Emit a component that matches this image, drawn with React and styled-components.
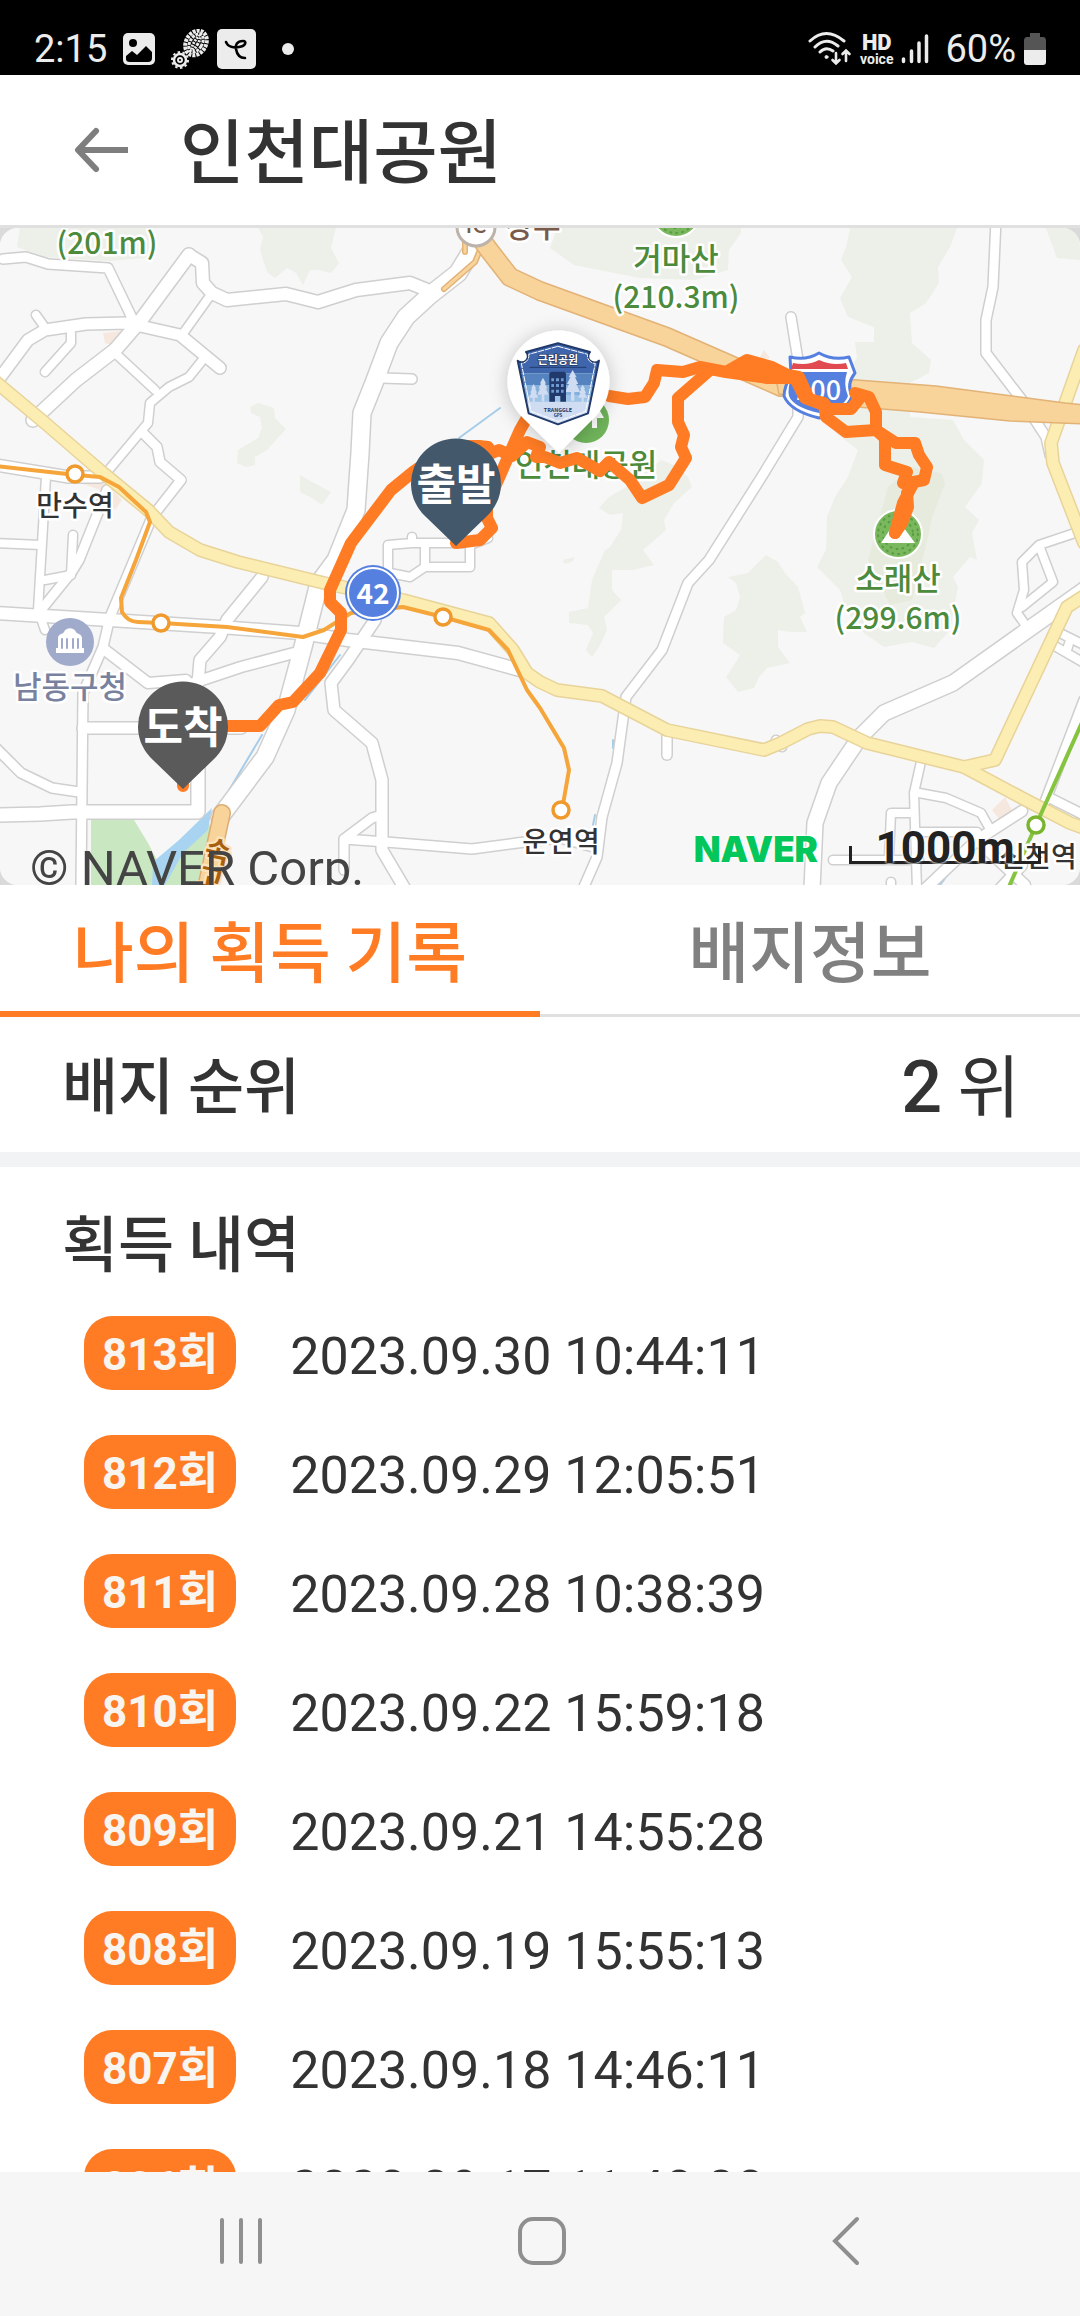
import React from "react";
import styled, { createGlobalStyle } from "styled-components";

const KR = '"Noto Sans CJK KR", "Noto Sans", sans-serif';
const SYSTEM = 'Roboto, "Noto Sans CJK KR", sans-serif';
const ORANGE = "#ff7c24";
const INK = "#333333";

const GlobalStyle = createGlobalStyle`
  * { box-sizing: border-box; }
  body { margin: 0; background: #fff; color: ${INK}; font-family: ${KR}; }
  button { border: 0; padding: 0; background: none; font: inherit; color: inherit; cursor: pointer; }
  svg { display: block; }
`;

const Screen = styled.div`
  display: flex;
  flex-direction: column;
  height: 100vh;
  overflow: hidden;
`;

const StatusBar = styled.div`
  display: flex;
  flex: none;
  align-items: center;
  justify-content: space-between;
  height: 75px;
  padding: 22px 34px 0;
  background: #000;
  color: #ececec;
  font: 400 38px/48px ${SYSTEM};
`;

const StatusGroup = styled.div`
  display: flex;
  align-items: center;
  gap: ${(p) => p.$gap}px;
`;

const HdVoice = styled.span`
  display: flex;
  flex-direction: column;
  align-items: center;
  font: 900 22px/20px Roboto, sans-serif;
`;

const VoiceText = styled.span`
  font: 700 14px/12px Roboto, sans-serif;
`;

const Header = styled.header`
  display: flex;
  flex: none;
  align-items: center;
  gap: 50px;
  height: 153px;
  padding: 0 72px;
  border-bottom: 3px solid #e0e0e0;
`;

const Title = styled.h1`
  margin: 0;
  padding-bottom: 4px;
  font-size: 70px;
  font-weight: 500;
  line-height: 100px;
`;

const MapFrame = styled.section`
  flex: none;
  background: #dadada;
`;

const MapCard = styled.div`
  position: relative;
  overflow: hidden;
  border-radius: 18px;
  background: #f7f7f7;
  & > svg { width: 100%; height: auto; }
`;

const Copyright = styled.span`
  position: absolute;
  left: 30px;
  bottom: -12px;
  color: #444;
  font: 400 49px/56px ${SYSTEM};
`;

const MapLegend = styled.div`
  position: absolute;
  right: 39px;
  bottom: 21px;
  display: flex;
  align-items: flex-end;
  gap: 31px;
`;

const NaverMark = styled.span`
  color: #03c75a;
  font: 900 35px/30px Inter, sans-serif;
  text-shadow: 0 0 3px #fff, 0 0 3px #fff;
`;

const ScaleBar = styled.span`
  width: 192px;
  height: 32px;
  text-align: center;
  color: #222;
  font: 700 44px/32px ${SYSTEM};
  background:
    linear-gradient(#222, #222) left bottom / 3px 18px no-repeat,
    linear-gradient(#222, #222) right bottom / 3px 18px no-repeat,
    linear-gradient(#222, #222) left bottom / 100% 3px no-repeat;
  text-shadow: 0 0 3px #fff, 0 0 3px #fff;
`;

const Tabs = styled.div`
  display: flex;
  flex: none;
  height: 132px;
  box-shadow: inset 0 -3px #e0e0e0;
`;

const Tab = styled.button`
  flex: 1;
  border-bottom: 6px solid ${(p) => (p.$active ? ORANGE : "transparent")};
  color: ${(p) => (p.$active ? ORANGE : "#808080")};
  font-size: 66px;
  font-weight: 500;
  line-height: 92px;
`;

const RankRow = styled.section`
  display: flex;
  flex: none;
  align-items: center;
  justify-content: space-between;
  height: 135px;
  padding: 0 60px 0 62px;
`;

const SectionTitle = styled.h2`
  margin: 0;
  padding-bottom: 4px;
  font-size: 61px;
  font-weight: 500;
  line-height: 88px;
`;

const Rank = styled.span`
  padding-top: 2px;
  font: 400 68px/92px ${KR};
`;

const RankNumber = styled.strong`
  font: 500 72px/92px ${SYSTEM};
`;

const Divider = styled.hr`
  flex: none;
  width: 100%;
  height: 15px;
  margin: 0;
  border: 0;
  background: #f1f3f5;
`;

const History = styled.section`
  flex: 1;
  min-height: 0;
  padding: 30px 62px 0;
  overflow: hidden;
`;

const HistoryList = styled.ol`
  display: flex;
  flex-direction: column;
  gap: 45px;
  margin: 27px 0 0;
  padding: 0 22px;
  list-style: none;
`;

const HistoryItem = styled.li`
  display: flex;
  align-items: center;
  gap: 54px;
  height: 74px;
`;

const CountPill = styled.span`
  height: 74px;
  padding: 2px 18px 0;
  border-radius: 28px;
  background: ${ORANGE};
  color: #f8f4f0;
  font: 700 44px/74px ${SYSTEM};
  white-space: nowrap;
`;

const Stamp = styled.time`
  padding-top: 8px;
  font: 400 52px/74px ${SYSTEM};
  white-space: nowrap;
`;

const NavBar = styled.nav`
  display: flex;
  flex: none;
  align-items: center;
  justify-content: space-between;
  height: 144px;
  padding: 0 210px 6px;
  background: #f6f6f6;
  color: #8f8f8f;
`;

const records = [
  ["813", "2023.09.30 10:44:11"],
  ["812", "2023.09.29 12:05:51"],
  ["811", "2023.09.28 10:38:39"],
  ["810", "2023.09.22 15:59:18"],
  ["809", "2023.09.21 14:55:28"],
  ["808", "2023.09.19 15:55:13"],
  ["807", "2023.09.18 14:46:11"],
  ["806", "2023.09.17 11:48:08"],
];

/* ---------- status icons ---------- */

const PictureIcon = () => (
  <svg width="32" height="32" viewBox="0 0 32 32">
    <rect width="32" height="32" rx="5" fill="#ececec" />
    <circle cx="10" cy="10" r="4" />
    <path d="M3 23L9 18L14 22L23 13L29 19V25Q29 29 25 29H7Q3 29 3 26Z" />
  </svg>
);

const TireIcon = () => (
  <svg width="40" height="40" viewBox="0 0 40 40" fill="none" stroke="#ececec">
    <g transform="rotate(30 25 14)">
      <ellipse cx="25" cy="14" rx="10" ry="13" strokeWidth="4" strokeDasharray="3 1" />
      <ellipse cx="25" cy="14" rx="6" ry="10" strokeWidth="3" strokeDasharray="3 1" />
      <ellipse cx="25" cy="14" rx="2" ry="8" strokeWidth="3" strokeDasharray="2 1" />
    </g>
    <circle cx="9" cy="31" r="6" strokeWidth="2.5" />
    <circle cx="9" cy="31" r="8" strokeWidth="2" strokeDasharray="2.5 2.5" />
    <circle cx="9" cy="31" r="2" strokeWidth="2" />
  </svg>
);

const SwirlIcon = () => (
  <svg width="40" height="40" viewBox="0 0 40 40" fill="none">
    <rect width="39" height="40" rx="5" fill="#ececec" />
    <path d="M9 13C11 18 17 19 22 18C29 17 30 12 26 12C20 12 18 16 19 20C20 26 23 29 28 29" stroke="#000" strokeWidth="2.600" strokeLinecap="round" />
  </svg>
);

const DotIcon = () => (
  <svg width="14" height="14" viewBox="0 0 14 14"><circle cx="7" cy="7" r="6" fill="#ececec" /></svg>
);

const WifiIcon = () => (
  <svg width="44" height="36" viewBox="0 0 44 36" fill="none" stroke="#ececec" strokeWidth="3" strokeLinecap="round">
    <path d="M2 10Q18 -5 36 10M7 16Q18 5 30 15M12 21Q18 15 25 20" />
    <circle cx="18.500" cy="26" r="1.500" fill="#ececec" strokeWidth="1" />
    <path d="M28 22V32M24.500 29L28 32.500L31.500 29M38 30V20M34.500 23L38 19.500L41.500 23" strokeWidth="2.600" />
  </svg>
);

const SignalIcon = () => (
  <svg width="28" height="32" viewBox="0 0 28 32" stroke="#ececec" strokeWidth="3.500" strokeLinecap="round">
    <path d="M2.500 26V28.500M10.500 18V28.500M18 10V28.500M25.500 3V28.500" />
  </svg>
);

const BatteryIcon = () => (
  <svg width="22" height="34" viewBox="0 0 22 34">
    <path d="M6 1H16V5H19Q22 5 22 9V18H0V9Q0 5 3 5H6Z" fill="#555" />
    <path d="M0 18H22V30Q22 33 19 33H3Q0 33 0 30Z" fill="#ececec" />
  </svg>
);

/* ---------- map drawing ---------- */

const localRoads = [
  [9, "M3 259L26 257L48 264L108 268L133 320"],
  [13, "M189 255L141 320L115 350L76 380L33 420"],
  [12, "M189 255L202 263L203 283L212 293L227 300L286 294L318 302L356 290L410 283L432 292"],
  [8, "M212 293L182 335"],
  [11, "M-4 383L28 340L45 330L86 324L127 323L180 335L220 368"],
  [8, "M36 315L46 329"],
  [8, "M71 333V343L45 372"],
  [8, "M115 353L155 390"],
  [8, "M205 357L189 377L169 387L150 403L148 423L107 472"],
  [9, "M143 433L157 447L160 462L181 480L152 517L134 560L110 617L103 647L83 693L81 885"],
  [11, "M-4 465L69 477L100 477"],
  [8, "M46 477L41 560L38 610L45 630"],
  [8, "M-4 543L41 545"],
  [9, "M107 490L79 560L71 573L41 610"],
  [8, "M73 535L71 575L45 580"],
  [17, "M474 228L472 250L458 273L430 295L406 317L389 343L374 383L362 413L360 453L356 510L336 560L319 583L303 647L286 710L265 757L220 817"],
  [9, "M382 378L412 379"],
  [9, "M996 220L993 287L986 320V353L1022 400L1046 437L1050 455"],
  [9, "M791 317L798 360V417L764 473L709 560L688 583L662 650L626 697L617 763L602 817L597 857L583 889"],
  [8, "M1084 530L1039 545L1022 562L1024 590L1017 613L1029 630"],
  [8, "M1040 548L1053 582L1022 607"],
  [15, "M1084 590L953 683L884 713L860 737L829 783L815 823L812 889"],
  [8, "M1058 632L1084 645M1053 645L1084 663M1070 640L1067 650"],
  [9, "M1084 700L1043 807M1050 798L1084 815"],
  [9, "M667 735V755"],
  [8, "M776 740L782 747"],
  [8, "M922 757L914 793L917 889M919 793L946 798L981 813L990 829M914 813H891L889 857M914 832L977 832M833 860H919M891 882V889"],
  [10, "M1022 811L977 840L925 889M977 840L1025 885M1000 889L1022 865"],
  [12, "M-4 613L110 620L220 627L300 633L348 640L458 653L520 670"],
  [11, "M262 577L227 620L220 637L200 660L198 683"],
  [10, "M294 653L241 667L193 683M105 650L148 683L186 680"],
  [11, "M83 728H241"],
  [9, "M-4 748L21 773L52 788L79 792"],
  [13, "M-4 815L40 814L72 812L198 812V760"],
  [11, "M375 620L348 660L331 683L334 710L372 743L382 780V850L405 889"],
  [9, "M382 815L372 818L344 839V870M344 839L386 842L472 849L517 843L560 838L597 848"],
  [8, "M388 572V545L412 543H470V567H425L410 577L390 573M425 545V567M412 543V537M470 545L488 538"],
];

const yellowRoads = [
  "M-4 382L45 423L103 473L148 510L169 532L200 550L238 562L324 583L403 600L489 623L513 650L527 673L540 682L557 690L602 696L667 730L764 750L781 743L808 729L820 726L833 727L867 743L964 767L1022 798L1070 823L1084 828",
  "M964 767L995 760L1050 643L1067 607L1084 596",
  "M1084 350L1051 443L1053 463L1084 543",
];

const routes = [
  "M183 786V726H260L279 705L293 702L320 673L341 630V613L330 602V590L351 543L391 490L413 472L450 446H479L488 447L492 453L499 450L512 456L527 442L540 447L536 457H545L560 463L577 458L600 471L609 462L630 480L642 498L669 485L686 458L681 447L684 435L678 422V398L710 370",
  "M609 396L628 399L645 397L654 383L657 370L683 372L700 367L726 372L747 360L772 367L788 375L799 377L809 399L824 403L828 409H851L860 398L855 393L869 397L876 412V430L896 443H915L919 455L927 467L924 480L914 482L907 493L908 507L902 523L895 533",
  "M726 372L767 378L795 378L805 398L824 405L826 417L846 432L876 430L885 438V465L907 472L903 483L914 482L903 503L895 533",
  "M745 364L768 373L793 378",
  "M540 395L520 430L487 505V518L492 528L480 540L456 543",
];

const Cased = ({ d, w, fill, edge }) => (
  <>
    {edge && <path d={d} stroke={edge} strokeWidth={w + 3} />}
    {fill && <path d={d} stroke={fill} strokeWidth={w} />}
  </>
);

const Station = ({ x, y, color }) => (
  <circle cx={x} cy={y} r="8" fill="#fff" stroke={color} strokeWidth="3.500" />
);

const MapText = styled.text`
  font-family: ${KR};
  font-size: ${(p) => p.$size}px;
  font-weight: ${(p) => p.$weight || 500};
  fill: ${(p) => p.$fill};
  stroke: ${(p) => p.$halo || "none"};
  stroke-width: 5px;
  stroke-linejoin: round;
  paint-order: stroke;
  text-anchor: middle;
`;

const Label = ({ x, y, size = 28, color = "#333", children }) => (
  <MapText x={x} y={y} $size={size} $fill={color} $halo="#fff">{children}</MapText>
);

const Pin = ({ x, y, color, children }) => (
  <g transform={`translate(${x} ${y})`}>
    <path d="M0 63L-30 34A45 45 0 1 1 30 34Z" fill={color} />
    <MapText x="0" y="17" $size={43} $weight={700} $fill="#fff">{children}</MapText>
  </g>
);

const PeakIcon = ({ x, y }) => (
  <g transform={`translate(${x} ${y})`}>
    <circle r="24" fill="#7ab85e" stroke="#fff" strokeWidth="2" />
    <circle r="20" fill="none" stroke="#5a9a45" strokeWidth="2" strokeDasharray="1 5" />
    <circle r="15" fill="none" stroke="#5a9a45" strokeWidth="2" strokeDasharray="1 5" />
    <path d="M-17 9L-5 -9L1 -1L6 -6L17 9Z" fill="#fff" />
  </g>
);

const Tree = ({ x, y, s }) => (
  <path transform={`translate(${x} ${y}) scale(${s})`} d="M0 0L12 22H7L17 42H11L22 66H5V92H-5V66H-22L-11 42H-17L-7 22H-12Z" fill="#cfdcf2" />
);

const ParkBadge = () => (
  <g>
    <path d="M559 453L524 419A51 51 0 1 1 593 419Z" fill="#fff" filter="url(#pinShadow)" />
    <g transform="translate(380 310) scale(0.3333)">
      <clipPath id="shield">
        <path d="M534 100L630 126A17 17 0 0 0 657 152L624 310L534 343L446 310L413 152A17 17 0 0 0 438 126Z" />
      </clipPath>
      <g clipPath="url(#shield)">
        <path d="M400 90H670V190H400Z" fill="#3f66ad" />
        <path d="M400 190H670V225H400Z" fill="#5583bf" />
        <path d="M400 225H670V275H400Z" fill="#86b0dc" />
        <path d="M400 272H670V350H400Z" fill="#cfdcf2" />
        <path d="M400 270H440V255H640V275H400Z" fill="#9fc3e6" />
      </g>
      <Tree x="461" y="222" s="0.620" />
      <Tree x="489" y="203" s="0.780" />
      <Tree x="578" y="180" s="1" />
      <Tree x="608" y="224" s="0.600" />
      <path d="M508 275V190L514 185H552L558 190V275H541V258H525V275Z" fill="#213a6b" />
      <path d="M514 205h8v9h-8zM528 205h9v9h-9zM543 205h8v9h-8zM514 222h8v9h-8zM528 222h9v9h-9zM543 222h8v9h-8zM514 239h8v9h-8zM528 239h9v9h-9zM543 239h8v9h-8z" fill="#6f9bd0" />
      <path d="M450 172H618" stroke="#213a6b" strokeWidth="3" />
      <path d="M534 100L630 126A17 17 0 0 0 657 152L624 310L534 343L446 310L413 152A17 17 0 0 0 438 126Z" fill="none" stroke="#213a6b" strokeWidth="6" />
      <path d="M534 109L623 133A22 22 0 0 0 646 160L617 304L534 334L453 304L424 160A22 22 0 0 0 446 133Z" fill="none" stroke="#fff" strokeWidth="3" strokeDasharray="16 5" />
      <MapText x="534" y="163" $size={33} $weight={700} $fill="#fff" $halo="#213a6b">근린공원</MapText>
      <MapText x="534" y="306" $size={16} $weight={700} $fill="#213a6b">TRANGGLE</MapText>
      <MapText x="534" y="322" $size={13} $weight={700} $fill="#213a6b">GPS</MapText>
    </g>
  </g>
);

const TrailMap = () => (
  <svg viewBox="0 228 1080 657" role="img" aria-label="인천대공원 지도" fill="none" strokeLinejoin="round" strokeLinecap="round">
    <defs>
      <filter id="pinShadow" x="-40%" y="-40%" width="180%" height="180%">
        <feDropShadow dx="0" dy="2" stdDeviation="9" floodColor="#000" floodOpacity="0.220" />
      </filter>
    </defs>
    <rect y="228" width="1080" height="657" fill="#f7f7f7" />
    <g fill="#edf0e9">
      <path d="M20 228L17 247L45 257L110 261L155 257L153 228Z" />
      <path d="M258 228L263 237L260 250L267 272L275 278L287 268L296 273L303 285L310 270H318L331 273L339 263L331 248L336 228Z" />
      <path d="M250 407L258 403L274 408L275 418L286 429L267 450L255 457V465L246 467L237 463L238 450L258 438L262 428L260 417L251 413Z" />
      <path d="M300 475L312 482L331 492L322 505L312 498L300 492Z" />
      <path d="M557 228L550 248L574 265L599 270L640 278L695 280L728 270L729 250L741 233V228Z" />
      <path d="M850 228L846 247L841 260L852 277L840 298L848 317L874 327V342H855L857 357L848 375L850 400L829 417L836 433L858 450L848 477L835 497L827 517L826 550L817 567L840 590L846 610L864 633L884 647L912 642L934 648L950 630L958 587L953 577L970 557L977 560L972 533L979 520L965 507L982 483L984 460L964 440L953 420L910 417V383L929 373L931 360L912 343L910 313L926 303L939 283L938 267L950 247L957 228Z" />
      <path d="M1046 228L1057 258L1080 260V228Z" />
      <path d="M661 460L674 465L688 477L692 487L674 503L664 520L666 530L643 550L654 565L633 570H612V590L621 600L604 617L607 630L599 647L592 657L586 650L593 633L588 625L569 623V612L588 608L592 580L605 550L610 547L621 530L623 513L610 515L599 508L609 497L626 487Z" />
      <path d="M766 555L778 562L785 573L798 587L805 613L800 617L807 632H790L778 630V647L790 663L767 668L759 677L754 688L738 692L726 677L731 670L740 655L723 643L724 617L736 610L740 597L736 583L728 577L748 573Z" />
      <path d="M563 560L575 557L572 562L564 564Z" />
    </g>
    <path d="M912 467L941 473L945 483L931 520L929 533L912 600L890 605L868 560L888 487Z" fill="#e6ebdd" />
    <g fill="#f6e8de">
      <path d="M103 333L122 331L112 345L105 343Z" />
      <path d="M78 482H105L122 500L115 510L100 490Z" />
      <path d="M992 810L1005 797L1012 810L1000 820Z" />
      <path d="M758 360L764 350L770 358Z" />
    </g>
    <path d="M91 820H134L148 843L162 870V885H91Z M208 820L218 850L205 885H160L179 857Z" fill="#c9e7c0" />
    <path d="M212 808L208 830L183 853L165 885H152L153 862L179 840Z" fill="#a8d4f2" />
    <path d="M340 655L305 700M262 735L222 802M459 438L500 408M613 740V748M595 815L593 825M955 865L940 885" stroke="#a5cdea" strokeWidth="2" />

    {localRoads.map(([w, d]) => <Cased key={d} d={d} w={w} edge="#cfcfcf" />)}
    {localRoads.map(([w, d]) => <Cased key={d} d={d} w={w} fill="#fff" />)}
    {yellowRoads.map((d) => <Cased key={d} d={d} w={11} edge="#e8d49a" />)}
    {yellowRoads.map((d) => <Cased key={d} d={d} w={11} fill="#fcedb2" />)}

    <Cased d="M465 240V252M480 250L475 262L444 289" w={3} edge="#e2b277" fill="#f8d39a" />
    <Cased d="M478 235L489 250L510 277L540 291L667 337L781 387" w={17} edge="#e2b277" fill="#f8d39a" />
    <path d="M775 374L857 380L936 386L1065 403L1084 405V424L1010 421L920 412L857 407L779 394Z" fill="#f8d39a" stroke="#e2b277" strokeWidth="1.500" />
    <Cased d="M222 813L205 892" w={15} edge="#dcae76" fill="#f8d39a" />

    <g strokeWidth="4" stroke="#f5a53a">
      <path d="M-4 466L76 475L100 477L119 487L146 512L150 522L136 560L121 598L122 612Q128 622 138 622L161 623L227 627L303 637L324 630L351 613L403 607L443 617L489 630L508 650L527 690L540 708L564 748L569 770L562 810" />
      <path d="M1084 718L1036 825L1008 889" stroke="#86c440" />
    </g>
    <Station x="75" y="474" color="#f09a2e" />
    <Station x="161" y="623" color="#f09a2e" />
    <Station x="443" y="617" color="#f09a2e" />
    <Station x="561" y="810" color="#f09a2e" />
    <Station x="1036" y="825" color="#79b52f" />

    <g transform="translate(70 642)">
      <circle r="24" fill="#a0abcc" />
      <path d="M-12 -4C-12 -8 -7 -8 -6 -10C-4 -15 4 -15 6 -10C7 -8 12 -8 12 -4V6H14V11H-14V6H-12Z" fill="#fff" />
      <path d="M-8 -3V6M-3 -3V6M3 -3V6M8 -3V6" stroke="#a0abcc" strokeWidth="2" />
    </g>
    <PeakIcon x={676} y={213} />
    <PeakIcon x={898} y={534} />
    <circle cx="586" cy="420" r="23" fill="#6fb35a" />
    <path d="M594 400L604 418H597V428H592V418H584Z" fill="#fff" />

    <circle cx="476" cy="227" r="19" fill="#fff" stroke="#bdb3aa" strokeWidth="3" />
    <Label x={476} y={233} size={22} color="#7a5a48">IC</Label>
    <Label x={533} y={237} size={30} color="#7a5a48">장수</Label>
    <Label x={107} y={254} size={30} color="#4c8a3c">(201m)</Label>
    <Label x={676} y={270} size={31} color="#4c8a3c">거마산</Label>
    <Label x={676} y={308} size={30} color="#4c8a3c">(210.3m)</Label>
    <Label x={898} y={590} size={31} color="#4c8a3c">소래산</Label>
    <Label x={898} y={629} size={30} color="#4c8a3c">(299.6m)</Label>
    <Label x={586} y={476} size={31} color="#4c8a3c">인천대공원</Label>
    <Label x={75} y={516} size={28}>만수역</Label>
    <Label x={70} y={698} size={31} color="#78829f">남동구청</Label>
    <Label x={561} y={852} size={28}>운연역</Label>
    <Label x={1038} y={867} size={28}>신천역</Label>
    <g transform="rotate(12 218 852)">
      <MapText x="218" y="862" $size={28} $weight={700} $fill="#a8600f" $halo="#fbe3bd">속</MapText>
      <MapText x="216" y="890" $size={28} $weight={700} $fill="#a8600f" $halo="#fbe3bd">고</MapText>
    </g>

    <path d="M790 357Q806 361 819 353Q833 361 849 357L855 373Q846 384 852 396Q848 411 819 418Q790 411 784 396Q784 388 791 374Z" fill="#fff" stroke="#5580e0" strokeWidth="3" />
    <path d="M793 363Q808 366 819 360Q832 366 846 363L848 369H791Z" fill="#e04a50" />
    <path d="M793 372H847Q843 384 848 396Q844 408 819 413Q793 407 789 396Q787 388 793 372Z" fill="#5580e0" />
    <MapText x="818" y="400" $size={27} $weight={500} $fill="#fff">100</MapText>
    <circle cx="373" cy="593" r="28" fill="#5580e0" />
    <circle cx="373" cy="593" r="25" stroke="#fff" strokeWidth="2" />
    <MapText x="373" y="604" $size={28} $weight={700} $fill="#fff">42</MapText>

    {routes.map((d) => <path key={d} d={d} stroke={ORANGE} strokeWidth="12" />)}

    <ParkBadge />
    <Pin x={456} y={483} color="#44586b">출발</Pin>
    <Pin x={183} y={726} color="#5a5a5a">도착</Pin>
  </svg>
);

export default function App() {
  return (
    <Screen>
      <GlobalStyle />
      <StatusBar>
        <StatusGroup $gap={16}>
          <span>2:15</span>
          <PictureIcon />
          <StatusGroup $gap={6}>
            <TireIcon />
            <SwirlIcon />
          </StatusGroup>
          <StatusGroup $gap={8}>
            <span />
            <DotIcon />
          </StatusGroup>
        </StatusGroup>
        <StatusGroup $gap={8}>
          <WifiIcon />
          <HdVoice>HD<VoiceText>voice</VoiceText></HdVoice>
          <SignalIcon />
          <span />
          <span>60%</span>
          <BatteryIcon />
        </StatusGroup>
      </StatusBar>

      <Header>
        <button type="button" aria-label="뒤로">
          <svg width="58" height="48" viewBox="0 0 58 48" fill="none" stroke="#7e7e7e" strokeWidth="6">
            <path d="M24 5L6 24L24 43" strokeLinecap="round" strokeLinejoin="round" />
            <path d="M6 24H56" />
          </svg>
        </button>
        <Title>인천대공원</Title>
      </Header>

      <MapFrame>
        <MapCard>
          <TrailMap />
          <Copyright>© NAVER Corp.</Copyright>
          <MapLegend>
            <NaverMark>NAVER</NaverMark>
            <ScaleBar>1000m</ScaleBar>
          </MapLegend>
        </MapCard>
      </MapFrame>

      <Tabs role="tablist">
        <Tab type="button" role="tab" aria-selected="true" $active>나의 획득 기록</Tab>
        <Tab type="button" role="tab" aria-selected="false">배지정보</Tab>
      </Tabs>

      <RankRow>
        <SectionTitle>배지 순위</SectionTitle>
        <Rank><RankNumber>2</RankNumber> 위</Rank>
      </RankRow>
      <Divider />

      <History>
        <SectionTitle>획득 내역</SectionTitle>
        <HistoryList>
          {records.map(([count, stamp]) => (
            <HistoryItem key={count}>
              <CountPill>{count}회</CountPill>
              <Stamp>{stamp}</Stamp>
            </HistoryItem>
          ))}
        </HistoryList>
      </History>

      <NavBar>
        <button type="button" aria-label="최근 앱">
          <svg width="60" height="50" viewBox="0 0 60 50" stroke="currentColor" strokeWidth="4" strokeLinecap="round">
            <path d="M12 4V46M31 4V46M50 4V46" />
          </svg>
        </button>
        <button type="button" aria-label="홈">
          <svg width="60" height="50" viewBox="0 0 60 50" fill="none" stroke="currentColor" strokeWidth="4">
            <rect x="10" y="3" width="44" height="44" rx="13" />
          </svg>
        </button>
        <button type="button" aria-label="이전">
          <svg width="60" height="50" viewBox="0 0 60 50" fill="none" stroke="currentColor" strokeWidth="4" strokeLinecap="round">
            <path d="M47 3L25 25L47 47" />
          </svg>
        </button>
      </NavBar>
    </Screen>
  );
}
